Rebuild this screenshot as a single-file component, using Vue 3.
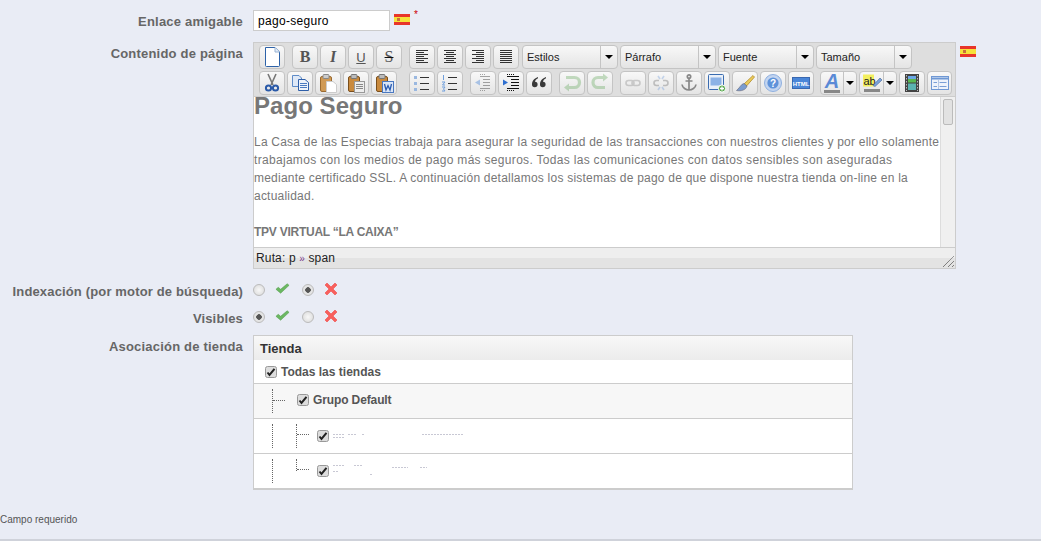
<script setup>
const L = (ys, x1s, x2s, c = '#333') => ys.map((y, i) => `<path d="M${x1s[i % x1s.length]} ${y}.5H${x2s[i % x2s.length]}" stroke="${c}"/>`).join('')
const ys = [3, 5, 7, 9, 11, 13, 15]
const icons = {
  doc: '<path d="M3.500 .5H13L17.500 5V18.500a1 1 0 0 1-1 1H4.500a1 1 0 0 1-1-1Z" fill="#fff" stroke="#2d62a8"/><path d="M13 .5V5H17.500" fill="#e4ecf6" stroke="#9ab4d4"/>',
  left: L(ys, [4], [16, 12, 16, 12, 16, 12, 16]),
  center: L(ys, [4, 6], [16, 14]),
  right: L(ys, [4, 8], [16]),
  full: L(ys, [4], [16]),
  cut: '<path d="M6 1 11 12M14 1 9 12" stroke="#777" stroke-width="1.600"/><circle cx="6.500" cy="15" r="2.600" fill="none" stroke="#2a5aa8" stroke-width="2"/><circle cx="13.500" cy="15" r="2.600" fill="none" stroke="#2a5aa8" stroke-width="2"/>',
  copy: '<path d="M2.500 2.500H9L11.500 5V13.500H2.500Z" fill="#dfe9f7" stroke="#5f8cc8"/><path d="M8.500 6.500H15L18.500 9.500V17.500H8.500Z" fill="#eef3fb" stroke="#2f5fa8"/><path d="M10 10.500H17M10 12.500H17M10 14.500H17" stroke="#4a7ac0"/>',
  paste: '<rect x="2.500" y="3.500" width="11" height="15" rx="1.500" fill="#d09a55" stroke="#9a6a30"/><rect x="5" y="1.500" width="6" height="4" rx="1" fill="#ccc" stroke="#888"/><path d="M8.500 8.500H15L18.500 11.500V19.500H8.500Z" fill="#fff" stroke="#ccc"/>',
  pastetext: '<rect x="2.500" y="3.500" width="11" height="15" rx="1.500" fill="#c98a3e" stroke="#7a4f1c"/><rect x="5" y="1.500" width="6" height="4" rx="1" fill="#bbb" stroke="#777"/><rect x="8.500" y="8.500" width="10" height="11" fill="#eee" stroke="#999"/><path d="M10 11.500H17M10 13.500H17M10 15.500H17" stroke="#888"/>',
  pasteword: '<rect x="2.500" y="3.500" width="11" height="15" rx="1.500" fill="#c98a3e" stroke="#7a4f1c"/><rect x="5" y="1.500" width="6" height="4" rx="1" fill="#bbb" stroke="#777"/><rect x="8.500" y="8.500" width="11" height="11" fill="#dbe6f7" stroke="#4a78c0"/><path d="M10.500 11 12 17 14 12.500 16 17 17.500 11" fill="none" stroke="#2a5bb0" stroke-width="1.300"/>',
  ul: '<rect x="2" y="3" width="3" height="3" fill="#9ab8e0"/><rect x="2" y="9" width="3" height="3" fill="#9ab8e0"/><rect x="2" y="15" width="3" height="3" fill="#9ab8e0"/><path d="M8 4.500H17M8 10.500H17M8 16.500H17" stroke="#333"/>',
  ol: '<path d="M3.500 2V7M2 9H5L2.500 12H5M2 14H5L3.500 16 5 18H2" fill="none" stroke="#6f9edc"/><path d="M8 4.500H17M8 10.500H17M8 16.500H17" stroke="#333"/>',
  outdent: '<g opacity=".42"><path d="M7 3.500H17M10 6.500H17M10 9.500H17M10 12.500H17M7 15.500H17" stroke="#333"/><path d="M2 9.500 7 6.500V12.500Z" fill="#4a86d8"/><path d="M7 17.500H13M7 1.500H13" stroke="#333" stroke-dasharray="1 1"/></g>',
  indent: '<path d="M6 3.500H18M10 6.500H18M10 9.500H18M10 12.500H18M6 15.500H18" stroke="#111"/><path d="M7 9.500 2 6.500V12.500Z" fill="#2f6fd0"/><path d="M6 1.500H13M6 17.500H13" stroke="#111" stroke-dasharray="1 1"/>',
  quote: '<path d="M9 4C4.500 5.500 3 8.500 3 11.500a2.800 2.800 0 1 0 3-2.800c.2-1.500 1.200-2.700 3-3.500ZM17 4C12.500 5.500 11 8.500 11 11.500a2.800 2.800 0 1 0 3-2.800c.2-1.500 1.200-2.700 3-3.500Z" fill="#3a3a3a"/>',
  undo: '<g opacity=".35"><path d="M4 4.500H12.500a5 5 0 0 1 0 10H5" fill="none" stroke="#62a85a" stroke-width="3.200"/><path d="M2 14.500 7 10.500V18.500Z" fill="#62a85a"/></g>',
  redo: '<g opacity=".35"><path d="M16 4.500H8a5 5 0 0 0 0 10H15" fill="none" stroke="#62a85a" stroke-width="3.200"/><path d="M18 4.500 13 .5V8.500Z" fill="#62a85a"/></g>',
  link: '<g opacity=".28" fill="none" stroke="#666" stroke-width="1.600"><rect x="3" y="7.500" width="8" height="5" rx="2.500"/><rect x="9" y="7.500" width="8" height="5" rx="2.500"/></g>',
  unlink: '<g opacity=".4" fill="none" stroke="#777" stroke-width="1.600"><path d="M8 7.500H5.500a2.500 2.500 0 0 0 0 5H8M12 7.500H14.500a2.500 2.500 0 0 1 0 5H12"/><path d="M7 3 9 6M13 3 11 6M7 17 9 14M13 17 11 14" stroke="#7ba3dc"/></g>',
  anchor: '<g fill="none" stroke="#888" stroke-width="1.700"><circle cx="10" cy="3.500" r="1.700"/><path d="M10 5.500V17M6.500 8H13.500M3 11.500C3.500 15 7 17 10 17S16.500 15 17 11.500"/></g>',
  image: '<rect x="1.500" y="1.500" width="15" height="15" rx="1" fill="#eaf0f9" stroke="#3a6cb0"/><rect x="3.500" y="4.500" width="11" height="8" fill="#8cb2e6"/><circle cx="15" cy="15.500" r="3.600" fill="#5aa84f" stroke="#fff"/><path d="M13 15.500H17M15 13.500V17.500" stroke="#fff" stroke-width="1.300"/>',
  brush: '<path d="M9 11 18 2.500 19.500 4 11.500 13Z" fill="#eccc5a" stroke="#b08c2c" stroke-width=".8"/><path d="M9 10.500C6 11 5.500 14 1.500 17.500 6 18.500 11 17 12 13Z" fill="#7a9ccf" stroke="#667" stroke-width=".6"/>',
  help: '<circle cx="10" cy="10" r="8.500" fill="#c3d5f0" stroke="#8fb0e0"/><circle cx="10" cy="10" r="5.600" fill="#5f93da"/><text x="10" y="13.500" text-anchor="middle" font-size="10" font-weight="700" fill="#fff" font-family="Liberation Sans,sans-serif">?</text>',
  html: '<rect x="1.500" y="4.500" width="17" height="11" fill="#4a86d8" stroke="#3a68b0"/><text x="10" y="12.500" text-anchor="middle" font-size="6" font-weight="700" fill="#fff" font-family="Liberation Sans,sans-serif">HTML</text>',
  media: '<rect x="3" y="1" width="14" height="18" fill="#444"/><rect x="6" y="3" width="8" height="6.500" fill="#59b84f"/><rect x="6" y="3" width="8" height="3" fill="#6aa7e6"/><rect x="6" y="10.500" width="8" height="6.500" fill="#5ab3b0"/><path d="M4.500 2V18M15.500 2V18" stroke="#bbb" stroke-dasharray="1.500 1.500"/>',
  template: '<rect x="1.500" y="3.500" width="17" height="13" fill="#eef3fb" stroke="#6f98d4"/><path d="M2 5.500H18" stroke="#6f98d4" stroke-width="2"/><path d="M3.500 9.500H7M3.500 13.500H7M9.500 9.500H16.500M9.500 13.500H16.500" stroke="#7a9fd6"/><path d="M8.500 7V16" stroke="#b5c8e6"/>'
}
const row1a = [{ icon: 'doc' }]
const row1b = [{ t: 'B', c: 'b' }, { t: 'I', c: 'i' }, { t: 'U', c: 'u' }, { t: 'S', c: 's' }]
const row1c = ['left', 'center', 'right', 'full']
const selects = ['Estilos', 'Párrafo', 'Fuente', 'Tamaño']
const groups2 = [
  ['cut', 'copy', 'paste', 'pastetext', 'pasteword'],
  ['ul', 'ol'],
  ['outdent', 'indent', 'quote'],
  ['undo', 'redo'],
  ['link', 'unlink', 'anchor', 'image', 'brush', 'help', 'html']
]
const radios = [
  { label: 'Indexación (por motor de búsqueda)', first: false },
  { label: 'Visibles', first: true }
]
</script>

<template>
  <div class="page">
    <main class="form">
      <section class="row first">
        <label class="lab">Enlace amigable</label>
        <input class="slug" value="pago-seguro" />
        <svg class="flag" viewBox="0 0 16 11"><rect width="16" height="11" fill="#e8352a"/><rect y="3" width="16" height="5" fill="#f6e23a"/><rect x="3" y="4" width="3" height="3" fill="#c9703a"/></svg>
        <sup class="req">*</sup>
      </section>

      <section class="row editorrow">
        <label class="lab">Contenido de página</label>
        <div class="editor">
          <div class="toolbar">
            <div class="tbrow">
              <div class="grp g1">
                <button v-for="b in row1a" :key="b.icon" class="btn"><svg viewBox="0 0 20 20" v-html="icons[b.icon]"></svg></button>
              </div>
              <div class="grp g2">
                <button v-for="b in row1b" :key="b.t" class="btn letter" :class="b.c">{{ b.t }}</button>
              </div>
              <div class="grp g3">
                <button v-for="n in row1c" :key="n" class="btn"><svg viewBox="0 0 20 20" v-html="icons[n]"></svg></button>
              </div>
              <div class="grp g4">
                <div v-for="s in selects" :key="s" class="sel"><span class="seltxt">{{ s }}</span><span class="selarr"><i class="tri"></i></span></div>
              </div>
            </div>
            <div class="tbrow second">
              <div v-for="(g, i) in groups2" :key="i" class="grp" :class="'t' + i">
                <button v-for="n in g" :key="n" class="btn"><svg viewBox="0 0 20 20" v-html="icons[n]"></svg></button>
              </div>
              <div class="grp t5">
                <div class="split">
                  <span class="splitmain colora"><b>A</b><i class="colorbar"></i></span>
                  <span class="splitarr"><i class="tri"></i></span>
                </div>
                <div class="split">
                  <span class="splitmain colorh">
                    <svg viewBox="0 0 20 14"><rect x="1" y="0" width="11" height="12" fill="#f3ef5e"/><text x="1.500" y="10" font-size="11" fill="#222" font-family="Liberation Sans,sans-serif">ab</text><path d="M11 11 18 3.500 20 5.500 13 12Z" fill="#7ba3dc" stroke="#3f5f90" stroke-width=".6"/></svg>
                    <i class="colorbar"></i>
                  </span>
                  <span class="splitarr"><i class="tri"></i></span>
                </div>
                <button class="btn"><svg viewBox="0 0 20 20" v-html="icons.media"></svg></button>
                <button class="btn tpl"><svg viewBox="0 0 20 20" v-html="icons.template"></svg></button>
              </div>
            </div>
          </div>
          <div class="body">
            <article class="content">
              <h1>Pago Seguro</h1>
              <p>La Casa de las Especias trabaja para asegurar la seguridad de las transacciones con nuestros clientes y por ello solamente<br><span class="l2">trabajamos con los medios de pago más seguros. Todas las comunicaciones con datos sensibles son aseguradas</span><br>mediante certificado SSL. A continuación detallamos los sistemas de pago de que dispone nuestra tienda on-line en la<br>actualidad.</p>
              <p class="tpv">TPV VIRTUAL “LA CAIXA”</p>
            </article>
            <div class="scroll"><div class="thumb"></div></div>
          </div>
          <div class="status">
            <span>Ruta: p <em>»</em> span</span>
            <svg class="grip" viewBox="0 0 11 11"><path d="M0 11 11 0M5 11 11 5M9 11 11 9" stroke="#555" stroke-dasharray="1 .5"/></svg>
          </div>
        </div>
        <svg class="flag flag2" viewBox="0 0 16 11"><rect width="16" height="11" fill="#e8352a"/><rect y="3" width="16" height="5" fill="#f6e23a"/><rect x="3" y="4" width="3" height="3" fill="#c9703a"/></svg>
      </section>

      <section v-for="r in radios" :key="r.label" class="row radiorow">
        <label class="lab">{{ r.label }}</label>
        <i class="radio" :class="{ on: r.first }"></i>
        <svg class="yes" viewBox="0 0 16 14" preserveAspectRatio="none"><path d="M1 8 3.500 5.500 6 8 13 1 15 3 6 13Z" fill="#6bb862" stroke="#4f9a48" stroke-width=".6"/></svg>
        <i class="radio rb" :class="{ on: !r.first }"></i>
        <svg class="no" viewBox="0 0 14 14"><path d="M1 3 3 1 7 5 11 1 13 3 9 7 13 11 11 13 7 9 3 13 1 11 5 7Z" fill="#f8605c" stroke="#f04a4a" stroke-width=".6"/></svg>
      </section>

      <section class="row shoprow">
        <label class="lab">Asociación de tienda</label>
        <div class="shops">
          <div class="shead">Tienda</div>
          <div class="srow all">
            <svg class="cb" viewBox="0 0 12 12"><rect x=".5" y=".5" width="11" height="11" rx="2" fill="#ddd" stroke="#999"/><path d="M2.500 6.500 4.500 9 9.500 2.800" fill="none" stroke="#222" stroke-width="2"/></svg>
            <span class="sname">Todas las tiendas</span>
          </div>
          <div class="srow grupo">
            <span class="vl"></span><span class="hl"></span>
            <svg class="cb up" viewBox="0 0 12 12"><rect x=".5" y=".5" width="11" height="11" rx="2" fill="#ddd" stroke="#999"/><path d="M2.500 6.500 4.500 9 9.500 2.800" fill="none" stroke="#222" stroke-width="2"/></svg>
            <span class="sname up">Grupo Default</span>
          </div>
          <div class="srow shop">
            <span class="vl"></span><span class="vl v2"></span><span class="hl h2"></span>
            <svg class="cb up1" viewBox="0 0 12 12"><rect x=".5" y=".5" width="11" height="11" rx="2" fill="#ddd" stroke="#999"/><path d="M2.500 6.500 4.500 9 9.500 2.800" fill="none" stroke="#222" stroke-width="2"/></svg>
            <svg class="smudge" viewBox="0 0 135 12"><path d="M1 4.500H13M1 7.500H13M16 4.500H24M30 4.500H33M90 4.500H132" stroke="#c8c8d4" stroke-dasharray="2 1"/></svg>
          </div>
          <div class="srow shop lastrow">
            <span class="vl"></span><span class="vl v2 short"></span><span class="hl h2"></span>
            <svg class="cb up1" viewBox="0 0 12 12"><rect x=".5" y=".5" width="11" height="11" rx="2" fill="#ddd" stroke="#999"/><path d="M2.500 6.500 4.500 9 9.500 2.800" fill="none" stroke="#222" stroke-width="2"/></svg>
            <svg class="smudge" viewBox="0 0 135 12"><path d="M1 .5H12M22 .5H30M1 6.500H6M38 9.500H40M60 2.500H76M88 2.500H95" stroke="#c8c8d4" stroke-dasharray="2 1"/></svg>
          </div>
        </div>
      </section>
    </main>

    <p class="required">Campo requerido</p>
    <footer class="foot"></footer>
  </div>
</template>

<style>
html, body { margin: 0; background: #fff; }
</style>

<style scoped>
.page {
  height: 546px;
  width: 1041px;
  overflow: hidden;
  display: flex;
  flex-direction: column;
  background: #e9ecf5;
  font-family: "Liberation Sans", Arial, sans-serif;
}
.form { padding-top: 10px; height: 501px; box-sizing: border-box; }
.row { display: flex; align-items: flex-start; }
.lab {
  width: 243px;
  flex: none;
  margin-right: 10px;
  text-align: right;
  font-size: 13px;
  font-weight: 700;
  line-height: 16px;
  color: #666;
  letter-spacing: .2px;
}
.first { height: 21px; margin-bottom: 11px; }
.first .lab { padding-top: 4px; }
.slug {
  width: 137px;
  height: 21px;
  box-sizing: border-box;
  border: 1px solid #ccc;
  padding: 0 4px;
  font: 12px "Liberation Sans", Arial, sans-serif;
  letter-spacing: .3px;
  color: #000;
  background: #fff;
  outline: none;
}
.flag { width: 16px; height: 11px; flex: none; margin: 4px 0 0 4px; }
.req { color: #c00; font-size: 10px; line-height: 10px; margin: 0 0 0 4px; }
.editorrow { height: 227px; margin-bottom: 12px; }
.editorrow .lab { padding-top: 4px; }
.editor { width: 703px; height: 227px; box-sizing: border-box; border: 1px solid #ccc; display: flex; flex-direction: column; flex: none; }
.toolbar { height: 53px; box-sizing: border-box; background: #dedede; padding: 2px 0 0 5px; flex: none; }
.tbrow { display: flex; height: 24px; }
.second { margin-top: 2px; }
.grp { display: flex; gap: 2px; flex: none; }
.g2 { margin-left: 7px; }
.g3 { margin-left: 7px; }
.g4 { margin-left: 3px; gap: 2px; }
.t1 { margin-left: 12px; }
.t2 { margin-left: 7px; }
.t3 { margin-left: 7px; }
.t4 { margin-left: 7px; }
.t5 { margin-left: 6px; gap: 2px; }
.btn {
  width: 26px;
  height: 24px;
  box-sizing: border-box;
  padding: 0;
  display: flex;
  align-items: center;
  justify-content: center;
  border: 1px solid #c4c4c4;
  border-radius: 4px;
  background: linear-gradient(#f8f8f8, #e4e4e4);
}
.btn svg { width: 20px; height: 20px; display: block; }
.letter { font-family: "Liberation Serif", serif; font-size: 16px; color: #555; }
.b { font-weight: 700; }
.i { font-style: italic; font-weight: 700; }
.u { text-decoration: underline; font-family: "Liberation Sans", sans-serif; font-size: 13px; }
.s { text-decoration: line-through; text-decoration-color: #111; }
.sel { width: 96px; height: 24px; box-sizing: border-box; display: flex; border: 1px solid #c4c4c4; border-radius: 4px; background: linear-gradient(#f8f8f8, #e4e4e4); }
.seltxt { flex: 1; padding-left: 4px; font-size: 11px; line-height: 23px; color: #222; border-right: 1px solid #c4c4c4; }
.selarr { width: 16px; flex: none; display: flex; align-items: center; justify-content: center; }
.tri { display: block; width: 0; height: 0; border-left: 4px solid transparent; border-right: 4px solid transparent; border-top: 4px solid #000; }
.split { width: 37px; height: 24px; box-sizing: border-box; display: flex; border: 1px solid #c4c4c4; border-radius: 4px; background: linear-gradient(#f8f8f8, #e4e4e4); }
.split + .split { width: 38px; }
.splitmain { flex: 1; display: flex; flex-direction: column; align-items: center; border-right: 1px solid #c4c4c4; }
.splitarr { width: 12px; flex: none; display: flex; align-items: center; justify-content: center; }
.colora b { font: italic 700 20px/18px "Liberation Sans", sans-serif; color: #5a8ad6; }
.colorbar { display: block; width: 16px; height: 3px; background: #888; }
.colorh svg { width: 20px; height: 15px; margin-top: 2px; display: block; }
.tpl { width: 25px; }
.body { height: 151px; display: flex; background: #fff; border-top: 1px solid #ccc; box-sizing: border-box; flex: none; }
.content { flex: 1; min-width: 0; white-space: nowrap; color: #777; font-size: 12px; letter-spacing: .22px; }
.content h1 { margin: 0; font-size: 24px; line-height: 18px; padding-bottom: 18px; font-weight: 700; color: #777; letter-spacing: .05px; }
.content p { margin: 0; line-height: 18px; }
.l2 { letter-spacing: .31px; }
.content .tpv { padding-top: 18px; font-weight: 700; letter-spacing: -.25px; }
.scroll { width: 15px; flex: none; box-sizing: border-box; background: #f0f0f0; border-left: 1px solid #ddd; padding: 2px; }
.thumb { height: 26px; background: #e2e2e2; border: 1px solid #bbb; border-radius: 2px; box-sizing: border-box; }
.status { flex: 1; border-top: 1px solid #ccc; background: linear-gradient(#eee 50%, #e3e3e3 50%); display: flex; align-items: center; justify-content: space-between; padding-left: 2px; font-size: 12px; letter-spacing: .15px; color: #222; }
.status em { font-style: normal; color: #7a3a8a; font-size: 10px; }
.grip { width: 11px; height: 11px; align-self: flex-end; margin-right: 1px; margin-bottom: 1px; }
.radiorow { height: 20px; margin-bottom: 7px; align-items: center; }
.radiorow .lab { padding-top: 1px; letter-spacing: .15px; }
.radio { display: block; flex: none; width: 12px; height: 12px; box-sizing: border-box; margin-top: -3px; border: 1px solid #bbb; border-radius: 50%; background: radial-gradient(circle, #f8f8f8, #d8d8d8); }
.radio.on { background: radial-gradient(circle, #555 0 2.500px, #e4e4e4 3px); }
.yes { width: 15px; height: 11px; flex: none; margin: -6px 0 0 10px; }
.rb { margin-left: 12px; }
.no { width: 14px; height: 14px; flex: none; margin: -5px 0 0 10px; }
.shoprow .lab { padding-top: 4px; }
.shops { width: 600px; box-sizing: border-box; height: 155px; border: 1px solid #ccc; border-top-width: 1px; border-bottom-width: 2px; background: #fff; flex: none; color: #555; }
.shead { height: 24px; font-size: 13px; font-weight: 700; line-height: 25px; padding-left: 6px; color: #333; background: linear-gradient(#f8f8f8, #ececec); }
.srow { display: flex; align-items: center; box-sizing: border-box; border-bottom: 1px solid #ccc; font-size: 12px; font-weight: 700; }
.all { height: 24px; padding-left: 11px; }
.grupo { height: 35px; padding-left: 18px; background: #f7f7f7; letter-spacing: -.12px; }
.shop { height: 35px; padding-left: 18px; }
.lastrow { border-bottom: 0; height: 34px; }
.cb { width: 12px; height: 12px; flex: none; }
.up { margin-top: -2px; }
.up1 { margin-top: -1px; }
.sname { margin-left: 4px; }
.vl { display: block; flex: none; width: 0; height: 24px; border-left: 1px dotted #666; }
.hl { display: block; flex: none; width: 12px; height: 0; margin-right: 12px; margin-top: -2px; border-top: 1px dotted #666; }
.v2 { margin-left: 23px; }
.h2 { margin-right: 8px; margin-top: -4px; }
.short { height: 12px; margin-top: -12px; }
.smudge { width: 135px; height: 12px; margin-left: 3px; }
.required { margin: 13px 0 0; font-size: 10px; line-height: 12px; color: #555; height: 13px; }
.foot { margin-top: 12px; flex: 1; background: #fff; border-top: 2px solid #cfd2da; }
</style>
